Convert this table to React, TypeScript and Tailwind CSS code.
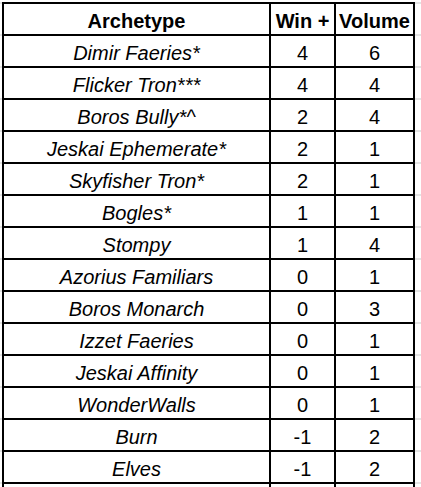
import React from 'react';

const rows: [string, string, string][] = [
  ['Dimir Faeries*', '4', '6'],
  ['Flicker Tron***', '4', '4'],
  ['Boros Bully*^', '2', '4'],
  ['Jeskai Ephemerate*', '2', '1'],
  ['Skyfisher Tron*', '2', '1'],
  ['Bogles*', '1', '1'],
  ['Stompy', '1', '4'],
  ['Azorius Familiars', '0', '1'],
  ['Boros Monarch', '0', '3'],
  ['Izzet Faeries', '0', '1'],
  ['Jeskai Affinity', '0', '1'],
  ['WonderWalls', '0', '1'],
  ['Burn', '-1', '2'],
  ['Elves', '-1', '2'],
  ['', '', ''],
];

export default function App() {
  return (
    <div className="h-[487px] w-[421px] overflow-hidden bg-white bg-[repeating-linear-gradient(to_bottom,#e4e4e4_0px,#e4e4e4_2px,transparent_2px,transparent_32px)] bg-[position:0_2px] font-['Liberation_Sans',Arial,sans-serif] text-black">
      <div className="mt-[2px] ml-[2px] grid w-[413px] grid-cols-[265px_63px_77px] gap-[2px] bg-black p-[2px]">
        {/* Header */}
        <HeadCell>Archetype</HeadCell>
        <HeadCell>Win +</HeadCell>
        <HeadCell>Volume</HeadCell>

        {rows.map(([name, win, vol], i) => (
          <React.Fragment key={i}>
            <div className="flex h-[30px] items-end justify-center bg-white pb-[1px] text-[20px] leading-[23px] italic">
              {name}
            </div>
            <div className="flex h-[30px] items-end justify-center bg-white pb-[1px] text-[20px] leading-[23px]">
              {win}
            </div>
            <div className="flex h-[30px] items-end justify-center bg-white pb-[1px] text-[20px] leading-[23px]">
              {vol}
            </div>
          </React.Fragment>
        ))}
      </div>
    </div>
  );
}

function HeadCell({ children }: { children: React.ReactNode }) {
  return (
    <div className="flex h-[30px] items-end justify-center bg-white pb-[1px] text-[20px] leading-[23px] font-bold whitespace-nowrap">
      {children}
    </div>
  );
}
